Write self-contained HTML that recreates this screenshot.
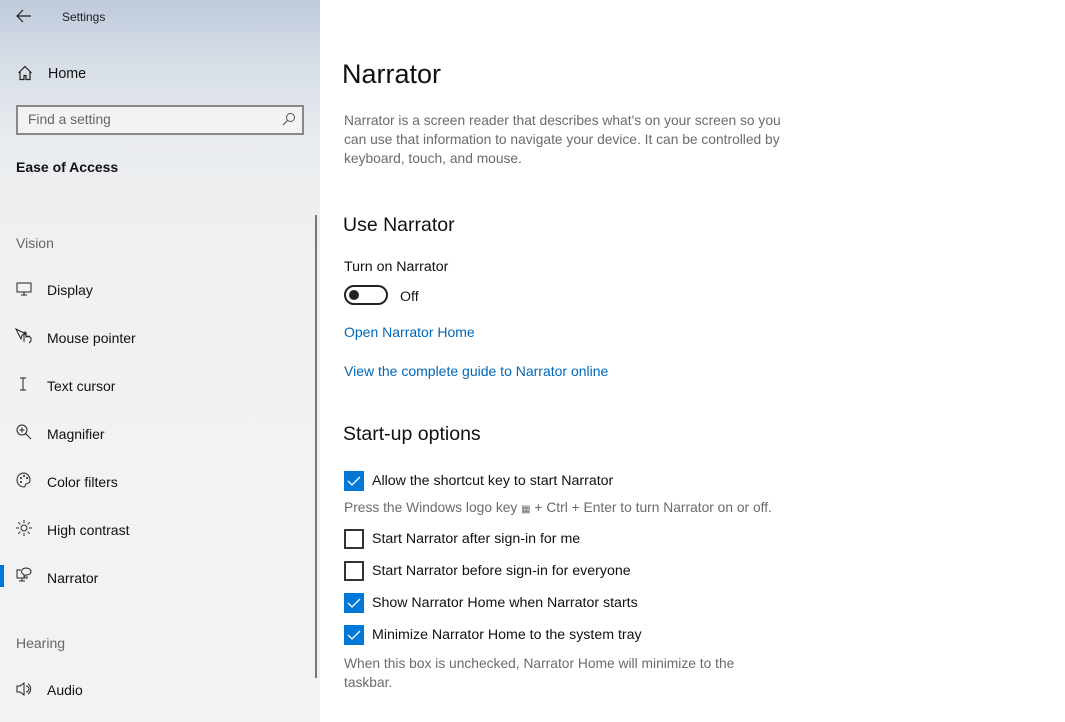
<!DOCTYPE html>
<html><head><meta charset="utf-8"><style>
*{margin:0;padding:0;box-sizing:border-box}
body{width:1065px;height:722px;overflow:hidden;background:#fff;font-family:"Liberation Sans",sans-serif;position:relative;color:#000}
.side{position:absolute;left:0;top:0;width:320px;height:722px;background:linear-gradient(180deg,#bfcadb 0px,#d6dde6 60px,#e9ecef 140px,#f1f1f1 260px,#f2f2f2 722px)}
.t{position:absolute;white-space:nowrap;line-height:18px}
.nav{font-size:14px;color:#111}
.ic{position:absolute}
.cb{position:absolute;left:344px;width:20px;height:20px}
.cb.on{background:#0078d7}
.cb.off{border:2px solid #333;background:#fff}
.g{color:#6b6b6b;font-size:13.8px}
.lk{color:#0067b8;font-size:14px}
.b{font-size:14.2px;color:#111}
</style></head><body>
<div class="side"></div>
<svg class="ic" style="left:16px;top:9px" width="16" height="14" viewBox="0 0 16 14"><path d="M7 1L1 7l6 6M1 7h14" fill="none" stroke="#222" stroke-width="1.2"/></svg>
<div class="t" style="left:62px;top:8px;font-size:12px;color:#222">Settings</div>
<svg class="ic" style="left:17px;top:65px" width="16" height="16" viewBox="0 0 16 16"><path d="M1.5 8L8 1.5 14.5 8M3 6.5V14.5h4v-4h2v4h4V6.5" fill="none" stroke="#222" stroke-width="1.2"/></svg>
<div class="t nav" style="left:48px;top:65px;font-size:14.3px">Home</div>
<div style="position:absolute;left:16px;top:105px;width:288px;height:30px;border:2px solid #888;background:#f2f3f5"></div>
<div class="t" style="left:28px;top:111px;font-size:13.8px;color:#666">Find a setting</div>
<svg class="ic" style="left:282px;top:112px" width="14" height="14" viewBox="0 0 14 14"><circle cx="8.5" cy="5.5" r="4" fill="none" stroke="#555" stroke-width="1"/><path d="M5.5 8.5L1 13" stroke="#555" stroke-width="1.2"/></svg>
<div class="t" style="left:16px;top:158px;font-size:14px;font-weight:bold;color:#111">Ease of Access</div>
<div class="t" style="left:16px;top:234px;font-size:14px;color:#666">Vision</div>
<div style="position:absolute;left:315px;top:215px;width:2px;height:463px;background:#777"></div>

<svg class="ic" style="left:16px;top:282px" width="16" height="14" viewBox="0 0 16 14"><rect x="1" y="1" width="14" height="9" fill="none" stroke="#222"/><path d="M8 10v3M5 13h6" stroke="#222"/></svg>
<div class="t nav" style="left:47px;top:281px">Display</div>
<svg class="ic" style="left:15px;top:328px" width="18" height="16" viewBox="0 0 18 16"><path d="M1 1l5 10 1-4 4-1z" fill="none" stroke="#222"/><path d="M9 14V5a1 1 0 012 0v4l1-1 1 1 1-1 2 2v3l-2 2" fill="none" stroke="#222"/></svg>
<div class="t nav" style="left:47px;top:329px">Mouse pointer</div>
<svg class="ic" style="left:18px;top:377px" width="10" height="14" viewBox="0 0 10 14"><path d="M2 1h6M2 13h6M5 1v12" stroke="#222"/></svg>
<div class="t nav" style="left:47px;top:377px">Text cursor</div>
<svg class="ic" style="left:16px;top:424px" width="16" height="16" viewBox="0 0 16 16"><circle cx="6" cy="6" r="5" fill="none" stroke="#222"/><path d="M6 3.5v5M3.5 6h5M9.5 9.5L15 15" stroke="#222"/></svg>
<div class="t nav" style="left:47px;top:425px">Magnifier</div>
<svg class="ic" style="left:16px;top:472px" width="16" height="16" viewBox="0 0 16 16"><path d="M8 1a7 7 0 100 14c1.5 0 1-2 2-3s4 0 4-4A7 7 0 008 1z" fill="none" stroke="#222"/><circle cx="5" cy="6" r="1" fill="#222"/><circle cx="8" cy="4" r="1" fill="#222"/><circle cx="11" cy="6" r="1" fill="#222"/><circle cx="5" cy="10" r="1" fill="#222"/></svg>
<div class="t nav" style="left:47px;top:473px">Color filters</div>
<svg class="ic" style="left:16px;top:520px" width="16" height="16" viewBox="0 0 16 16"><circle cx="8" cy="8" r="3" fill="none" stroke="#222"/><path d="M8 0v3M8 13v3M0 8h3M13 8h3M2.3 2.3l2 2M11.7 11.7l2 2M2.3 13.7l2-2M11.7 4.3l2-2" stroke="#222"/></svg>
<div class="t nav" style="left:47px;top:521px">High contrast</div>
<div style="position:absolute;left:0;top:565px;width:4px;height:22px;background:#0078d7"></div>
<svg class="ic" style="left:16px;top:567px" width="16" height="16" viewBox="0 0 16 16"><path d="M5 3H1v8h10v-2M6 11v3M3 14h6" fill="none" stroke="#222"/><path d="M10 1a5 3.5 0 110 7l-2 2v-2.5A5 3.5 0 0110 1z" fill="none" stroke="#222"/></svg>
<div class="t nav" style="left:47px;top:569px">Narrator</div>
<div class="t" style="left:16px;top:634px;font-size:14px;color:#666">Hearing</div>
<svg class="ic" style="left:16px;top:681px" width="16" height="16" viewBox="0 0 16 16"><path d="M1 5h3l4-3v12l-4-3H1z" fill="none" stroke="#222"/><path d="M10 5a3 3 0 010 6M12 3a6 6 0 010 10" fill="none" stroke="#222"/></svg>
<div class="t nav" style="left:47px;top:681px">Audio</div>

<div class="t" style="left:342px;top:57px;font-size:27px;line-height:34px;color:#111">Narrator</div>
<div class="t g" style="left:344px;top:111px;line-height:19px;white-space:normal;width:480px">Narrator is a screen reader that describes what's on your screen so you<br>can use that information to navigate your device. It can be controlled by<br>keyboard, touch, and mouse.</div>
<div class="t" style="left:343px;top:212px;font-size:19.5px;line-height:26px;color:#111">Use Narrator</div>
<div class="t b" style="left:344px;top:258px">Turn on Narrator</div>
<div style="position:absolute;left:344px;top:285px;width:44px;height:20px;border:2px solid #222;border-radius:10px"></div>
<div style="position:absolute;left:349px;top:290px;width:10px;height:10px;border-radius:5px;background:#222"></div>
<div class="t b" style="left:400px;top:288px">Off</div>
<div class="t lk" style="left:344px;top:323px">Open Narrator Home</div>
<div class="t lk" style="left:344px;top:362px">View the complete guide to Narrator online</div>
<div class="t" style="left:343px;top:421px;font-size:19.5px;line-height:26px;color:#111">Start-up options</div>

<svg class="cb on" style="top:471px" viewBox="0 0 20 20"><path d="M4 10l4 4 8-8" fill="none" stroke="#fff" stroke-width="1.3"/></svg>
<div class="t b" style="left:372px;top:472px">Allow the shortcut key to start Narrator</div>
<div class="t g" style="left:344px;top:499px">Press the Windows logo key <span style="font-size:10px">&#9638;</span> + Ctrl + Enter to turn Narrator on or off.</div>
<div class="cb off" style="top:529px"></div>
<div class="t b" style="left:372px;top:530px">Start Narrator after sign-in for me</div>
<div class="cb off" style="top:561px"></div>
<div class="t b" style="left:372px;top:562px">Start Narrator before sign-in for everyone</div>
<svg class="cb on" style="top:593px" viewBox="0 0 20 20"><path d="M4 10l4 4 8-8" fill="none" stroke="#fff" stroke-width="1.3"/></svg>
<div class="t b" style="left:372px;top:594px">Show Narrator Home when Narrator starts</div>
<svg class="cb on" style="top:625px" viewBox="0 0 20 20"><path d="M4 10l4 4 8-8" fill="none" stroke="#fff" stroke-width="1.3"/></svg>
<div class="t b" style="left:372px;top:626px">Minimize Narrator Home to the system tray</div>
<div class="t g" style="left:344px;top:654px;line-height:19px">When this box is unchecked, Narrator Home will minimize to the<br>taskbar.</div>
</body></html>
